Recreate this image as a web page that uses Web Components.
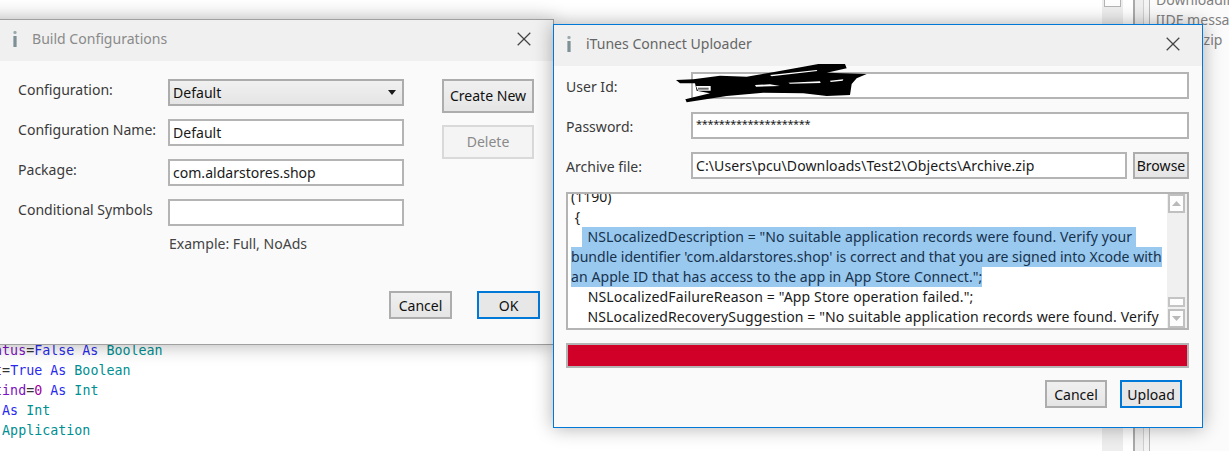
<!doctype html>
<html><head><meta charset="utf-8"><title>Uploader</title>
<style>
html,body{margin:0;padding:0;background:#fff}
body{width:1229px;height:451px;overflow:hidden;position:relative;font:14.06px/20px "Noto Sans",sans-serif;color:#333}
</style></head><body>
<desktop-bg></desktop-bg>
<build-dialog></build-dialog>
<uploader-dialog></uploader-dialog>
<script>
function def(name,html){
  customElements.define(name,class extends HTMLElement{
    constructor(){super();this.attachShadow({mode:'open'}).innerHTML=html;}
  });
}
def('ui-icon-info',`<style>:host{display:block;width:4px;height:16px}svg{display:block}</style>
<svg width="4" height="16" viewBox="0 0 4 16"><rect x=".4" y="0" width="3.2" height="3" rx="1.2" fill="#9aa9ad"/><rect x=".3" y="5" width="3.4" height="11" fill="#8b9ca1"/><rect x="1.4" y="5" width="1.2" height="11" fill="#75898f"/></svg>`);
def('ui-window',`<style>
:host{display:flex;flex-direction:column;position:absolute;box-sizing:border-box;background:#fafafa;border:1px solid var(--edge,#a0a0a0);box-shadow:0 0 18px rgba(0,0,0,.32)}
.bar{height:41px;box-sizing:border-box;flex:none;background:#f0f0f0;display:flex;align-items:center;gap:15px;padding:0 22px 4px var(--pad,13px);color:var(--cap,#808080)}
.t{flex:1}
svg{display:block}
</style>
<div class="bar"><ui-icon-info></ui-icon-info><div class="t"><slot name="caption"></slot></div>
<svg width="14" height="14" viewBox="0 0 14 14"><path d="M.7.7 13.3 13.3M13.3.7.7 13.3" stroke="#444" stroke-width="1.25" fill="none"/></svg></div>
<slot></slot>`);
def('ui-label',`<style>:host{display:block;color:#3a3a3a;white-space:nowrap;align-self:center;padding:var(--lab,0)}</style><slot></slot>`);
def('ui-field',`<style>:host{display:flex;align-items:center;box-sizing:border-box;height:27px;border:2px solid #b4b4b4;background:#fff;padding-left:3px;color:#1a1a1a;white-space:pre;overflow:hidden}</style><slot></slot>`);
def('ui-select',`<style>:host{display:flex;align-items:center;justify-content:space-between;box-sizing:border-box;height:27px;border:2px solid #acacac;background:linear-gradient(#f0f0f0,#e5e5e5);padding:1px 6px 0 3px;color:#111}
svg{display:block;margin-top:-1px}</style><slot></slot><svg width="8" height="5" viewBox="0 0 8 5"><path d="M0 0H8L4 5Z" fill="#1a1a1a"/></svg>`);
def('ui-button',`<style>:host{display:flex;align-items:center;justify-content:center;box-sizing:border-box;height:var(--h,28px);width:var(--w,63px);border:2px solid #adadad;background:linear-gradient(#f0f0f0,#e5e5e5);color:#111;white-space:nowrap;padding-top:var(--bt,1px)}
:host([primary]){border-color:#0078d7;background:#e7e7e7}
:host([disabled]){border-color:#d9d9d9;background:#f4f4f4;color:#8a8a8a}</style><slot></slot>`);
def('ui-scrollbar',`<style>:host{display:flex;flex-direction:column;flex:none;width:20px;background:#f0f0f0;box-sizing:border-box;padding:0 2px 0 1px}
.b{box-sizing:border-box;width:17px;height:19px;background:#fdfdfd;border:2px solid #c0c0c0;display:flex;align-items:center;justify-content:center;flex:none}
.thumb{box-sizing:border-box;height:10px;width:17px;background:#fdfdfd;border:2px solid #c4c4c4;margin-top:auto;margin-bottom:2px;flex:none}
svg{display:block}</style>
<div class="b"><svg width="9" height="5" viewBox="0 0 9 5"><path d="M0 5H9L4.5 0Z" fill="#b9b9b9"/></svg></div>
<div class="thumb"></div>
<div class="b"><svg width="9" height="5" viewBox="0 0 9 5"><path d="M0 0H9L4.5 5Z" fill="#b9b9b9"/></svg></div>`);
def('log-line',`<style>:host{display:block;height:20px;line-height:20px;white-space:pre;color:#1a1a1a;letter-spacing:var(--ls,0);padding-left:var(--ind,0)}</style><slot></slot>`);
def('sel-text',`<style>:host{display:inline-block;height:20px;line-height:20px;white-space:pre;background:#99c9ef;color:#17324d;padding-left:var(--si,0)}</style><slot></slot>`);
def('log-view',`<style>:host{display:flex;box-sizing:border-box;height:138px;margin-top:13px;border:2px solid #b4b4b4;background:#fff;overflow:hidden}
.txt{flex:1;min-width:0;overflow:hidden;padding-left:3px}
.in{margin-top:-7px}
.a{--ls:.077px;--si:1.5px}.c{--ls:.065px}.d{--ls:.13px;--ind:1.5px}.e{--ls:.1px;--ind:1.5px}</style>
<div class="txt"><div class="in">
<log-line>(1190)</log-line>
<log-line> {</log-line>
<log-line class="a">   <sel-text> NSLocalizedDescription = "No suitable application records were found. Verify your </sel-text></log-line>
<log-line><sel-text>bundle identifier 'com.aldarstores.shop' is correct and that you are signed into Xcode with</sel-text></log-line>
<log-line class="c"><sel-text>an Apple ID that has access to the app in App Store Connect.";</sel-text></log-line>
<log-line class="d">    NSLocalizedFailureReason = "App Store operation failed.";</log-line>
<log-line class="e">    NSLocalizedRecoverySuggestion = "No suitable application records were found. Verify</log-line>
</div></div><ui-scrollbar></ui-scrollbar>`);
def('ui-progress',`<style>:host{display:block;box-sizing:border-box;height:25px;margin-top:13px;border:2px solid #b4b4b4;background:#d10029}</style>`);
def('build-form',`<style>
:host{display:block;padding:18px 13px 0 37px}
.g{display:grid;width:516px;grid-template-columns:150px 236px 130px;grid-auto-rows:27px;row-gap:13px;--lab:0 0 5px 0}
.side{grid-column:3;grid-row:1/span 4;margin-left:38px;display:flex;flex-direction:column;gap:12px;--w:92px;--h:34px;--bt:0}
.ex{margin:8px 0 0 151px;color:#444}
.foot{display:flex;justify-content:flex-end;gap:25px;margin-top:37px}
</style>
<div class="g">
<ui-label>Configuration:</ui-label><ui-select>Default</ui-select>
<div class="side"><ui-button>Create New</ui-button><ui-button disabled>Delete</ui-button></div>
<ui-label>Configuration Name:</ui-label><ui-field>Default</ui-field>
<ui-label>Package:</ui-label><ui-field>com.aldarstores.shop</ui-field>
<ui-label>Conditional Symbols</ui-label><ui-field></ui-field>
</div>
<div class="ex">Example: Full, NoAds</div>
<div class="foot"><ui-button>Cancel</ui-button><ui-button primary>OK</ui-button></div>`);
def('build-dialog',`<style>:host{display:block;position:absolute;left:-20px;top:19px;width:574px;height:326px}
ui-window{left:0;top:0;width:574px;height:326px;--pad:32px;--cap:#8a8a8a}</style>
<ui-window><span slot="caption">Build Configurations</span><build-form></build-form></ui-window>`);
def('uploader-form',`<style>
:host{display:block;padding:6px 13px 0 12px}
.g{display:grid;grid-template-columns:125px 1fr;grid-auto-rows:27px;row-gap:13px;--lab:2px 0 0 0}
.r{display:flex;gap:6px}
.r ui-field{flex:1}
.path{letter-spacing:.08px}
.pw{font-size:11px;letter-spacing:-.35px;padding-bottom:3px}
.foot{display:flex;justify-content:flex-end;gap:13px;margin-top:12px;padding-right:7px;--w:62px}
.browse{--w:56px;--h:27px;--bt:0}
</style>
<div class="g">
<ui-label>User Id:</ui-label><ui-field></ui-field>
<ui-label>Password:</ui-label><ui-field><span class="pw">********************</span></ui-field>
<ui-label>Archive file:</ui-label>
<div class="r"><ui-field><span class="path">C:\\Users\\pcu\\Downloads\\Test2\\Objects\\Archive.zip</span></ui-field><ui-button class="browse">Browse</ui-button></div>
</div>
<log-view></log-view>
<ui-progress></ui-progress>
<div class="foot"><ui-button>Cancel</ui-button><ui-button primary>Upload</ui-button></div>`);
def('ink-scribble',`<style>:host{display:block;position:absolute;left:117px;top:36px;width:205px;height:46px;pointer-events:none}svg{display:block}</style>
<svg width="205" height="46" viewBox="0 0 615 138">
<path fill="#000" d="M18 60 70 58 150 47 230 50 300 38 400 20 445 12 525 12 530 25 470 38 590 42 560 55 545 72 540 105 470 108 400 100 280 98 170 108 50 127 46 118 120 100 80 92 75 70 30 70Z"/>
<path fill="#fff" d="M300 45 440 30 442 33 305 49ZM255 75 300 73 330 78 258 80ZM355 68 450 64 452 69 360 71ZM480 62 520 58 518 62 482 66ZM78 78H122V92H84Z"/>
<path fill="#6a6a6a" d="M84 83H116V89H84Z"/>
</svg>`);
def('uploader-dialog',`<style>:host{display:block;position:absolute;left:553px;top:24px;width:650px;height:404px}
ui-window{left:0;top:0;width:650px;height:404px;--pad:13px;--edge:#0078d7;--cap:#666}</style>
<ui-window><span slot="caption">iTunes Connect Uploader</span><uploader-form></uploader-form></ui-window><ink-scribble></ink-scribble>`);
def('desktop-bg',`<style>
:host{display:flex;position:absolute;left:0;top:0;width:1229px;height:451px;overflow:hidden;background:#fff}
.code{width:1124px;flex:none;box-sizing:border-box;padding-top:341px;margin-left:-22px;font:13.33px/20px "DejaVu Sans Mono",monospace;color:#333;white-space:pre}
.k{color:#2a2aee}.t{color:#008f92}.v{color:#7d10c0}.n{color:#a000a0}
.band{width:21px;flex:none;background:#eeeeee;display:flex;justify-content:center}
.btn{width:17px;height:7px;box-sizing:border-box;border:1px solid #b4b4b4;border-top:0;background:#fdfdfd}
.gap{width:10px;flex:none}
.p1{width:8px;flex:none;background:#eeeeee;border-left:2px solid #aaa}
.p2{width:5px;flex:none;background:#f4f4f4;border-left:1px solid #cfcfcf;border-right:1px solid #b8b8b8}
.out{flex:1;background:#fbfbfb;padding:0 0 0 6px;color:#808080;white-space:pre;overflow:hidden}
.in{margin-top:-10px}
</style>
<div class="code"><div>  <span class="v">atus</span>=<span class="k">False As</span> <span class="t">Boolean</span></div><div>  <span class="v">t</span>=<span class="k">True As</span> <span class="t">Boolean</span></div><div>  <span class="v">tind</span>=<span class="n">0</span> <span class="k">As</span> <span class="t">Int</span></div><div>   <span class="k">As</span> <span class="t">Int</span></div><div>   <span class="t">Application</span></div></div>
<div class="band"><div class="btn"></div></div><div class="gap"></div><div class="p1"></div><div class="p2"></div>
<div class="out"><div class="in"><div>Downloading</div><div>[IDE message</div><div>            .zip</div></div></div>`);
</script>
</body></html>
